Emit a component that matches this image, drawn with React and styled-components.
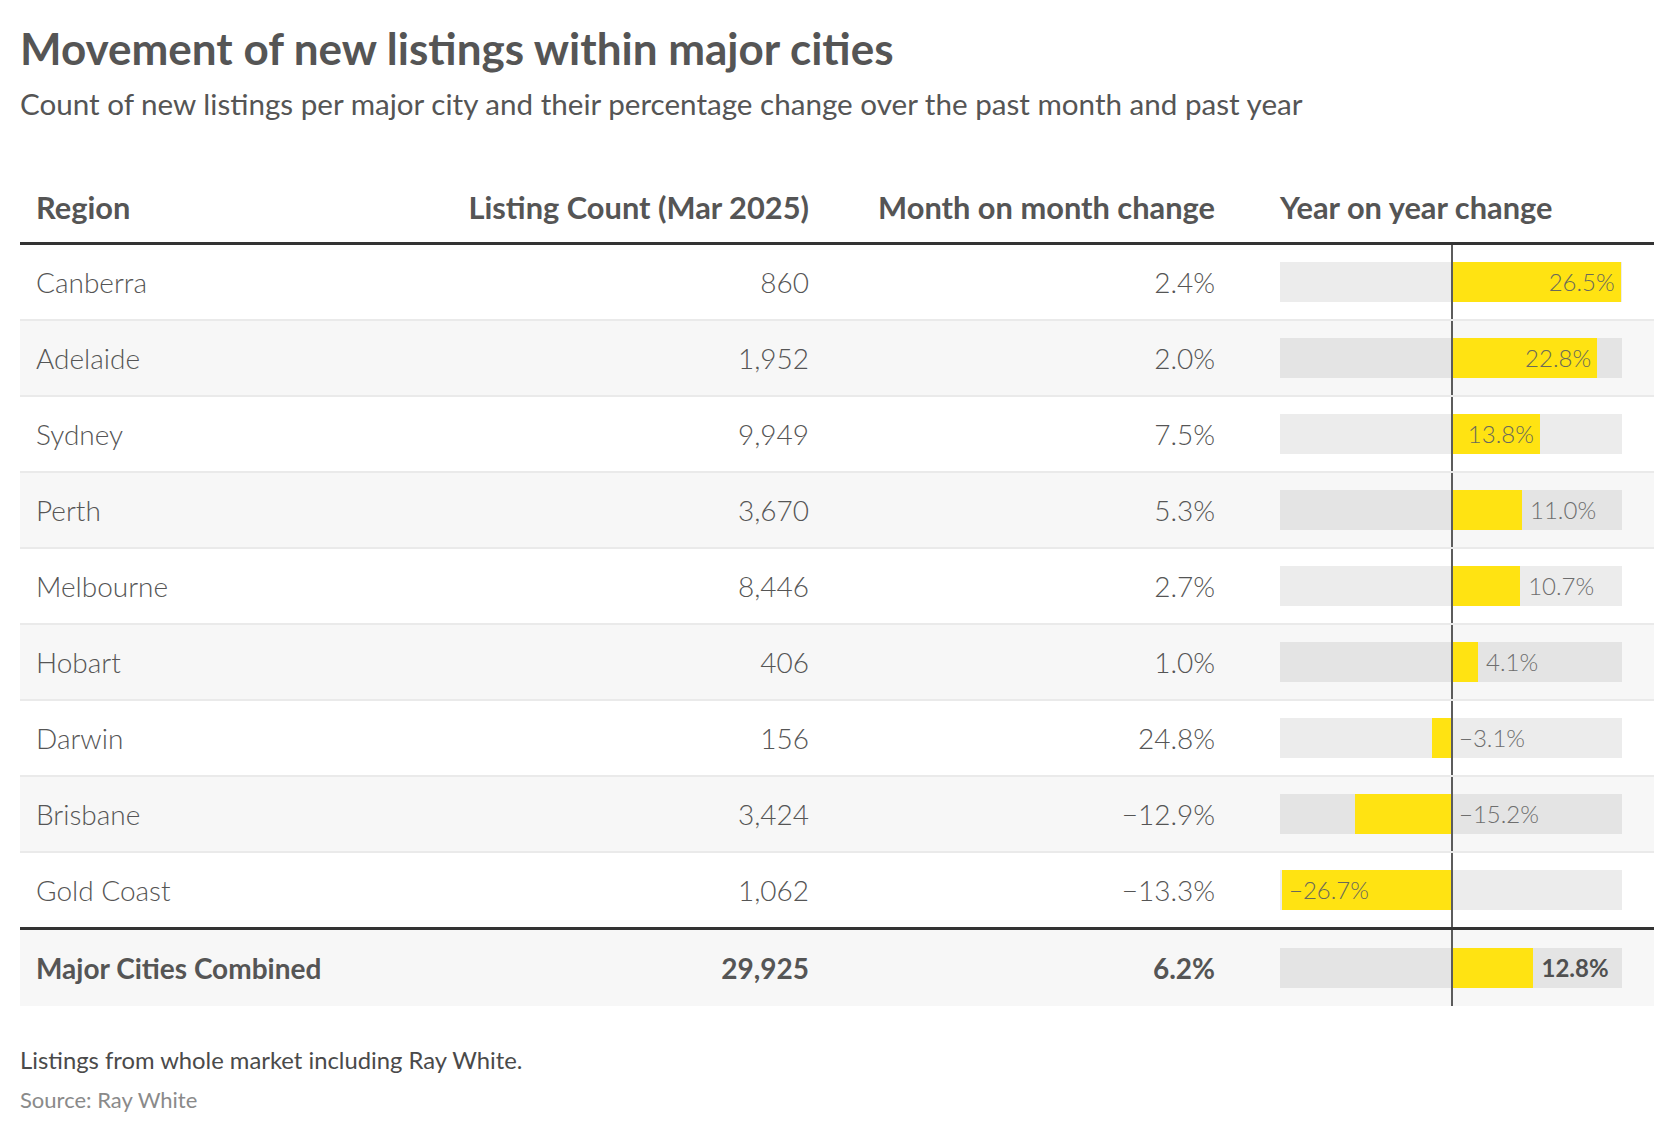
import React from 'react';
import styled, { createGlobalStyle } from 'styled-components';

const GlobalStyle = createGlobalStyle`
  html, body { margin: 0; padding: 0; background: #ffffff; }
  body { font-family: Lato, "Open Sans", "Liberation Sans", sans-serif; color: #555555; }
  * { box-sizing: border-box; }
`;

const Page = styled.div`
  padding: 22px 20px 0 20px;
  width: 1674px;
`;

const Title = styled.h1`
  margin: 0;
  font-size: 44px;
  line-height: 1.2;
  font-weight: 700;
  color: #555555;
`;

const Subtitle = styled.p`
  margin: 11px 0 0 0;
  font-size: 29.6px;
  line-height: 1.2;
  font-weight: 400;
  color: #555555;
`;

const Table = styled.div`
  margin-top: 68px;
  width: 1634px;
  display: flex;
  flex-direction: column;
`;

const COLS = '400px 405px 406px 1fr';

const HeadRow = styled.div`
  display: grid;
  grid-template-columns: ${COLS};
  border-bottom: 3px solid #333333;
`;

const HeadCell = styled.div`
  padding: 0 16px 16px ${(p) => (p.$bar ? '49px' : '16px')};
  text-align: ${(p) => (p.$right ? 'right' : 'left')};
  font-size: 30.8px;
  line-height: 37px;
  font-weight: 700;
  color: #555555;
  white-space: nowrap;
`;

const Row = styled.div`
  display: grid;
  grid-template-columns: ${COLS};
  height: ${(p) => (p.$last ? '74px' : '76px')};
  background: ${(p) => (p.$shade ? '#f7f7f7' : '#ffffff')};
  border-bottom: ${(p) => (p.$last ? 'none' : '2px solid #eaeaea')};
`;

const TotalRow = styled(Row)`
  height: 79px;
  background: #f7f7f7;
  border-top: 3px solid #333333;
  border-bottom: none;
`;

const Cell = styled.div`
  display: flex;
  align-items: center;
  justify-content: ${(p) => (p.$right ? 'flex-end' : 'flex-start')};
  padding: 0 16px;
  font-size: 28px;
  font-weight: ${(p) => (p.$bold ? 700 : 300)};
  color: #555555;
  white-space: nowrap;
`;

const BarCell = styled.div`
  position: relative;
  display: flex;
  align-items: center;
  padding-left: 49px;
`;

const Axis = styled.div`
  position: absolute;
  top: 0;
  bottom: 0;
  left: ${49 + 171}px;
  width: 2px;
  background: #5c5c5c;
  z-index: 2;
`;

const Track = styled.div`
  position: relative;
  width: 342px;
  height: 40px;
  background: rgba(0, 0, 0, 0.075);
`;

const Bar = styled.div`
  position: absolute;
  top: 0;
  bottom: 0;
  background: #ffe312;
`;

const Label = styled.span`
  position: absolute;
  top: 0;
  line-height: 40px;
  font-size: 24px;
  font-weight: ${(p) => (p.$bold ? 700 : 300)};
  color: ${(p) => (p.$bold ? '#505050' : p.$inside ? '#6a6a5a' : '#6e6e6e')};
  white-space: nowrap;
  z-index: 3;
`;

const Footnote = styled.p`
  margin: 40px 0 0 0;
  font-size: 23.8px;
  line-height: 1.2;
  font-weight: 400;
  color: #4a4a4a;
`;

const Source = styled.p`
  margin: 12px 0 0 0;
  font-size: 22px;
  line-height: 1.2;
  font-weight: 400;
  color: #8a8a8a;
`;

const AXIS = 172;
const SCALE = 170 / 26.7;

const fmt = (v) => (v < 0 ? '\u2212' + Math.abs(v).toFixed(1) + '%' : v.toFixed(1) + '%');

function YoyBar({ value, place, bold }) {
  const w = Math.abs(value) * SCALE;
  const left = value >= 0 ? AXIS : AXIS - w;
  let labelStyle;
  if (value >= 0) {
    labelStyle = place === 'in' ? { right: 342 - (AXIS + w) + 6 } : { left: AXIS + w + 8 };
  } else {
    labelStyle = place === 'in' ? { left: left + 7 } : { left: AXIS + 7 };
  }
  return (
    <BarCell>
      <Track>
        <Bar style={{ left, width: w }} />
        <Label style={labelStyle} $inside={place === 'in'} $bold={bold}>
          {fmt(value)}
        </Label>
      </Track>
      <Axis />
    </BarCell>
  );
}

const rows = [
  { region: 'Canberra', count: '860', mom: '2.4%', yoy: 26.5, place: 'in' },
  { region: 'Adelaide', count: '1,952', mom: '2.0%', yoy: 22.8, place: 'in' },
  { region: 'Sydney', count: '9,949', mom: '7.5%', yoy: 13.8, place: 'in' },
  { region: 'Perth', count: '3,670', mom: '5.3%', yoy: 11.0, place: 'out' },
  { region: 'Melbourne', count: '8,446', mom: '2.7%', yoy: 10.7, place: 'out' },
  { region: 'Hobart', count: '406', mom: '1.0%', yoy: 4.1, place: 'out' },
  { region: 'Darwin', count: '156', mom: '24.8%', yoy: -3.1, place: 'out' },
  { region: 'Brisbane', count: '3,424', mom: '\u221212.9%', yoy: -15.2, place: 'out' },
  { region: 'Gold Coast', count: '1,062', mom: '\u221213.3%', yoy: -26.7, place: 'in' },
];

export default function App() {
  return (
    <>
      <GlobalStyle />
      <Page>
        <Title>Movement of new listings within major cities</Title>
        <Subtitle>
          Count of new listings per major city and their percentage change over the past month and past year
        </Subtitle>
        <Table>
          <HeadRow>
            <HeadCell>Region</HeadCell>
            <HeadCell $right>Listing Count (Mar 2025)</HeadCell>
            <HeadCell $right>Month on month change</HeadCell>
            <HeadCell $bar>Year on year change</HeadCell>
          </HeadRow>
          {rows.map((r, i) => (
            <Row key={r.region} $shade={i % 2 === 1} $last={i === rows.length - 1}>
              <Cell>{r.region}</Cell>
              <Cell $right>{r.count}</Cell>
              <Cell $right>{r.mom}</Cell>
              <YoyBar value={r.yoy} place={r.place} />
            </Row>
          ))}
          <TotalRow>
            <Cell $bold>Major Cities Combined</Cell>
            <Cell $right $bold>29,925</Cell>
            <Cell $right $bold>6.2%</Cell>
            <YoyBar value={12.8} place="out" bold />
          </TotalRow>
        </Table>
        <Footnote>Listings from whole market including Ray White.</Footnote>
        <Source>Source: Ray White</Source>
      </Page>
    </>
  );
}
